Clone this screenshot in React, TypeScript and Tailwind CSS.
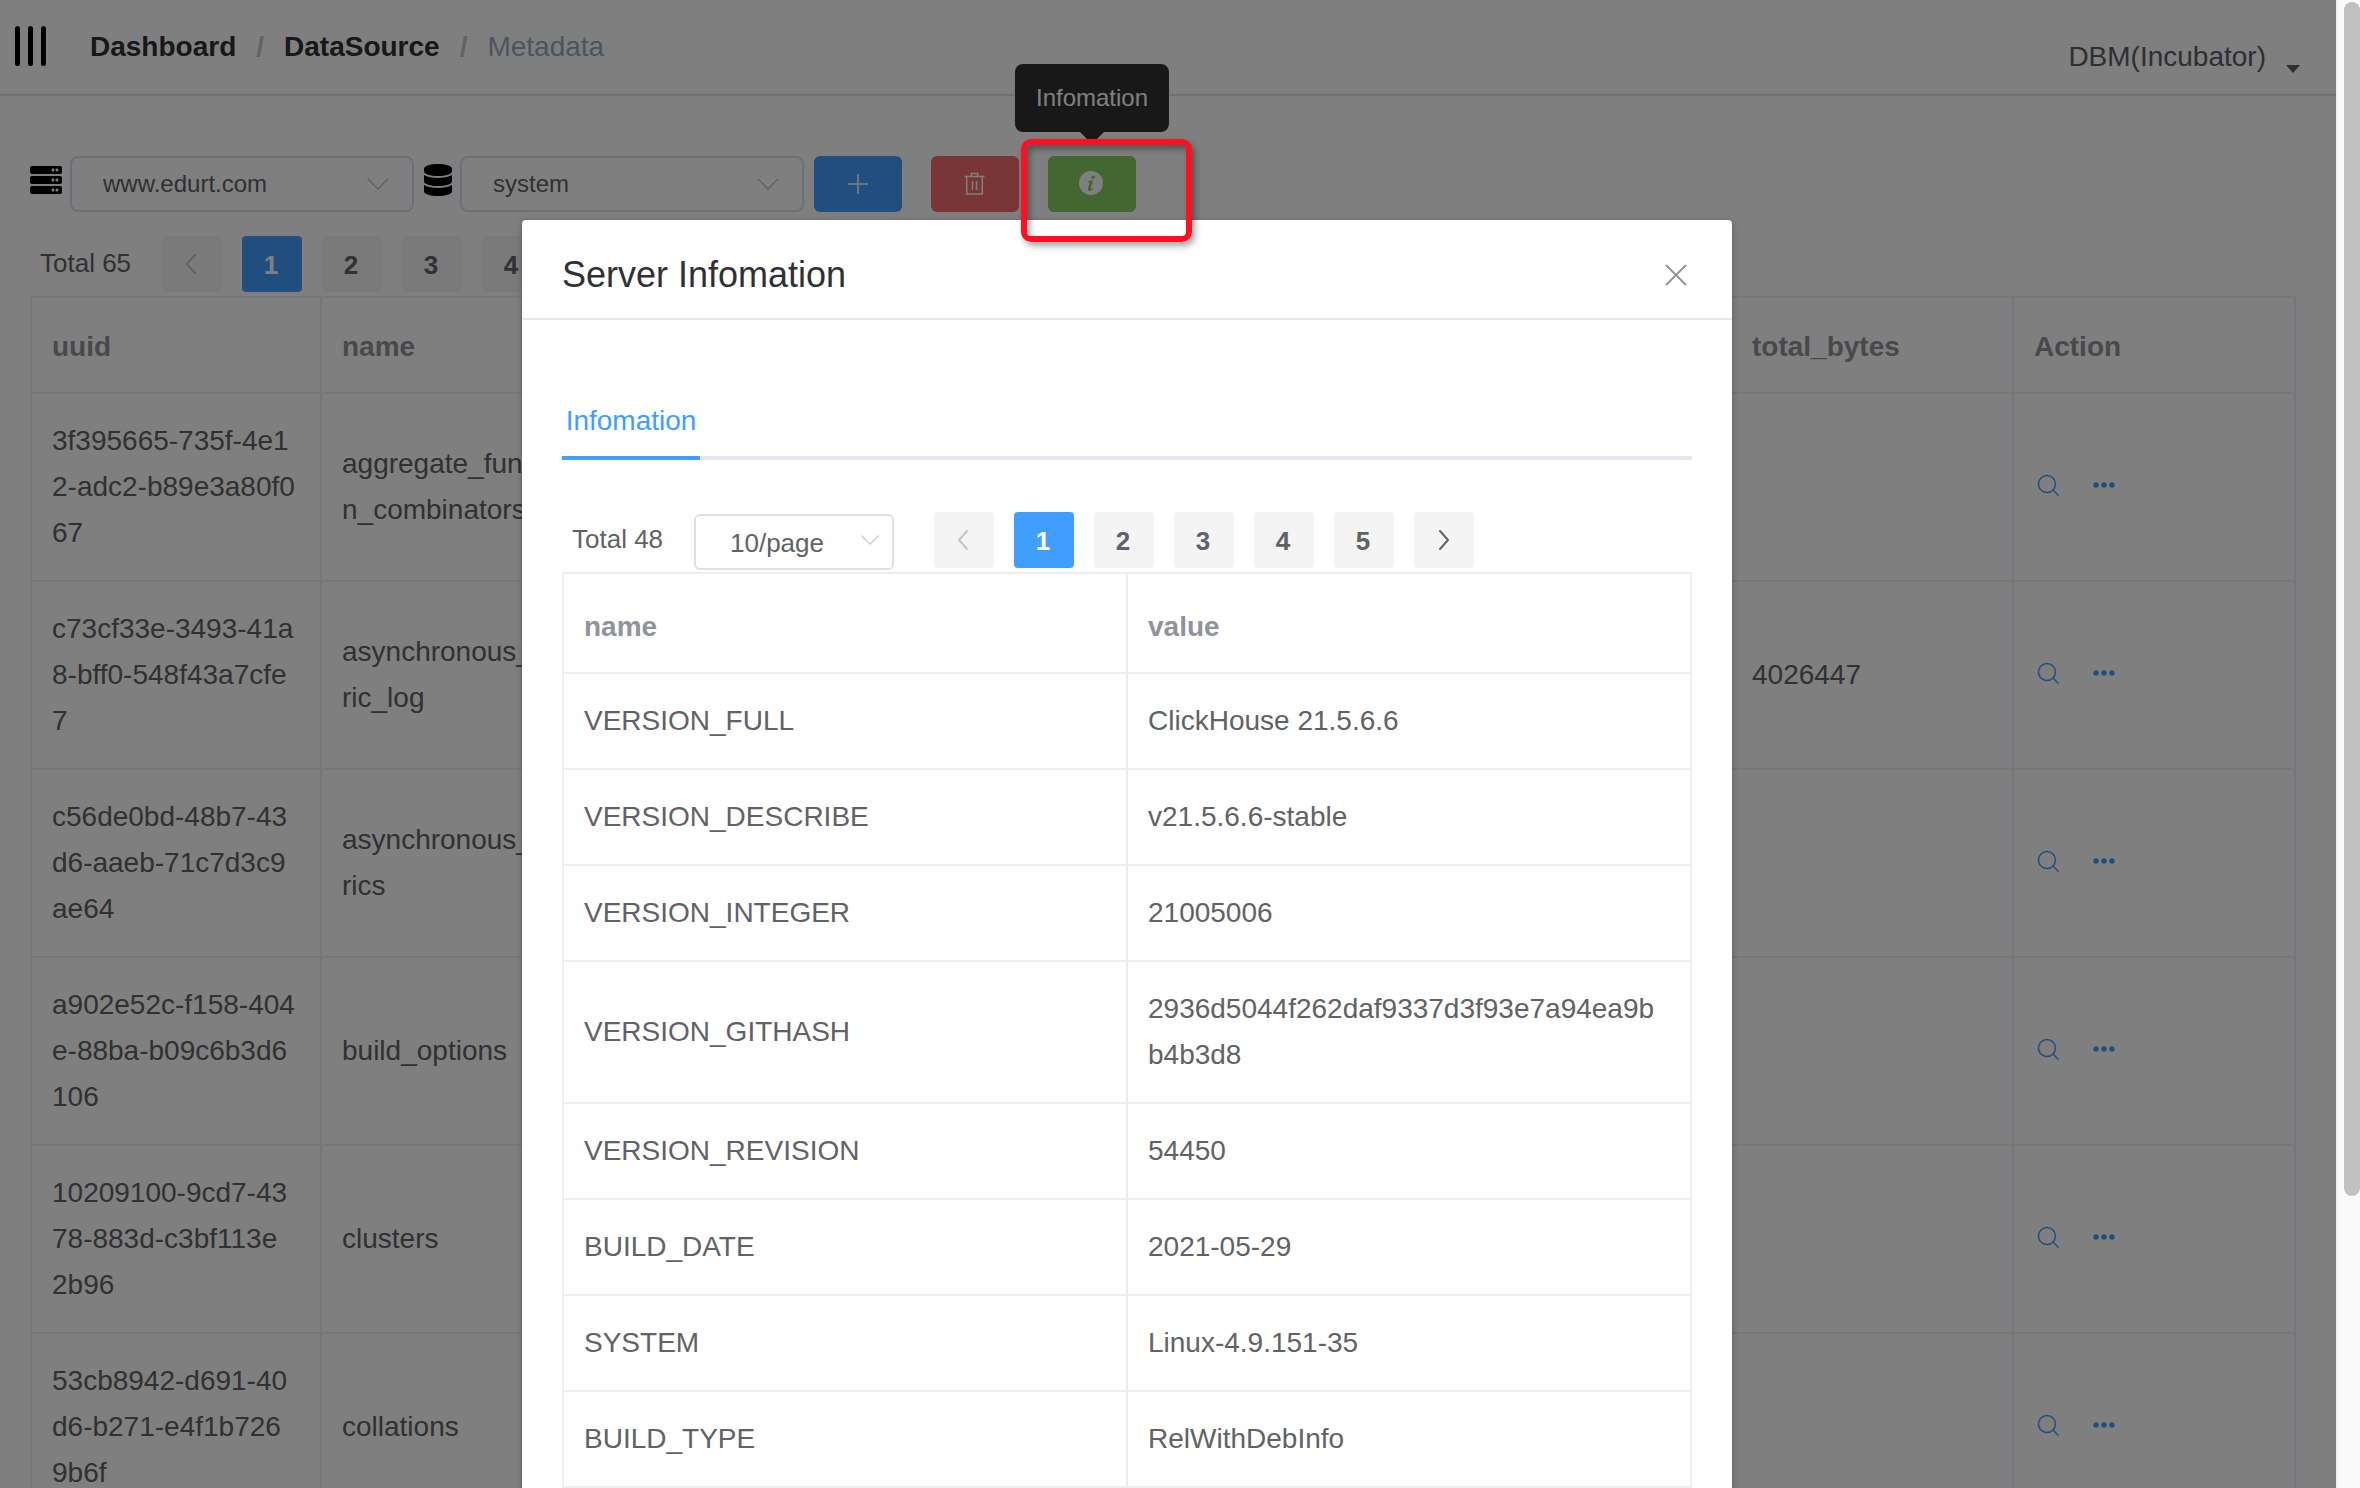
import React from "react";
import { FaDatabase, FaServer } from "react-icons/fa";

interface MetadataRow {
  uuid: string;
  name: string;
  totalBytes?: string;
}

interface ServerInfo {
  name: string;
  value: string;
}

const metadataRows: MetadataRow[] = [
  {
    uuid: "3f395665-735f-4e1\n2-adc2-b89e3a80f0\n67",
    name: "aggregate_functio\nn_combinators",
  },
  {
    uuid: "c73cf33e-3493-41a\n8-bff0-548f43a7cfe\n7",
    name: "asynchronous_met\nric_log",
    totalBytes: "4026447",
  },
  {
    uuid: "c56de0bd-48b7-43\nd6-aaeb-71c7d3c9\nae64",
    name: "asynchronous_met\nrics",
  },
  {
    uuid: "a902e52c-f158-404\ne-88ba-b09c6b3d6\n106",
    name: "build_options",
  },
  {
    uuid: "10209100-9cd7-43\n78-883d-c3bf113e\n2b96",
    name: "clusters",
  },
  {
    uuid: "53cb8942-d691-40\nd6-b271-e4f1b726\n9b6f",
    name: "collations",
  },
];

const serverInfo: ServerInfo[] = [
  { name: "VERSION_FULL", value: "ClickHouse 21.5.6.6" },
  { name: "VERSION_DESCRIBE", value: "v21.5.6.6-stable" },
  { name: "VERSION_INTEGER", value: "21005006" },
  {
    name: "VERSION_GITHASH",
    value: "2936d5044f262daf9337d3f93e7a94ea9b\nb4b3d8",
  },
  { name: "VERSION_REVISION", value: "54450" },
  { name: "BUILD_DATE", value: "2021-05-29" },
  { name: "SYSTEM", value: "Linux-4.9.151-35" },
  { name: "BUILD_TYPE", value: "RelWithDebInfo" },
];

// the columns between name and total_bytes
const emptyColumns = [0, 1, 2, 3];

const Chevron: React.FC<{ d: string; className: string; width?: number }> = ({
  d,
  className,
  width = 2,
}) => (
  <svg
    viewBox="0 0 24 24"
    className={className}
    fill="none"
    stroke="currentColor"
    strokeWidth={width}
    strokeLinecap="round"
    strokeLinejoin="round"
    aria-hidden="true"
  >
    <path d={d} />
  </svg>
);

const DOWN = "M2 7 12 17 22 7";
const LEFT = "M15 3 7 12 15 21";
const RIGHT = "M8 3 16 12 8 21";

const PlusIcon = () => (
  <svg viewBox="0 0 24 24" className="size-6" fill="none" stroke="currentColor" strokeWidth="1.6">
    <path d="M12 2v20M2 12h20" />
  </svg>
);

const TrashIcon = () => (
  <svg viewBox="0 0 24 24" className="size-6" fill="none" stroke="currentColor" strokeWidth="1.5">
    <path d="M1.500 4.500h20M3.700 4.500v17.500h15.600v-17.500M8.300 4.500V1.500h6.400v3M9.500 9v9M13.500 9v9" />
  </svg>
);

const InfoIcon = () => (
  <svg viewBox="0 0 24 24" className="size-6">
    <circle cx="12" cy="12" r="12" fill="currentColor" />
    <circle cx="14.200" cy="6.300" r="1.800" fill="#85ce61" />
    <path
      d="M9 10.200c1.700-.1 3.400-.5 5-1.100l-2.300 8.200c-.1.600 0 .9.300.9.500 0 1.100-.700 1.800-1.700l.600.400c-1.200 2-2.400 3-3.900 3-1.300 0-1.900-.9-1.500-2.300l1.500-5.400c.2-.8-.2-1.200-1.600-1.300z"
      fill="#85ce61"
    />
  </svg>
);

const SearchIcon = () => (
  <svg viewBox="0 0 28 28" className="size-7" fill="none" stroke="currentColor" strokeWidth="1.5">
    <circle cx="13" cy="11" r="8.500" />
    <path d="m18.500 16.500 6 6" />
  </svg>
);

const MoreIcon = () => (
  <svg viewBox="0 0 28 28" className="size-7" fill="currentColor">
    <circle cx="6" cy="12" r="2.700" />
    <circle cx="14" cy="12" r="2.700" />
    <circle cx="22" cy="12" r="2.700" />
  </svg>
);

const Select: React.FC<{ label: string; value: string }> = ({ label, value }) => (
  <div className="relative">
    <select
      aria-label={label}
      defaultValue={value}
      className="block h-14 w-[344px] appearance-none rounded-lg border-2 border-[#dcdfe6] bg-white pl-[31px] text-2xl text-[#606266]"
    >
      <option>{value}</option>
    </select>
    <Chevron
      d={DOWN}
      width={1.5}
      className="pointer-events-none absolute top-4 right-6 size-6 text-[#c0c4cc]"
    />
  </div>
);

const pageButton = "flex h-14 w-15 items-center justify-center rounded";

const Pager: React.FC<{ pages: number }> = ({ pages }) => (
  <nav className="flex gap-5 text-[26px] font-bold text-[#606266]">
    <button
      aria-label="Previous page"
      disabled
      className={`${pageButton} bg-[#f4f4f5] text-[#c0c4cc]`}
    >
      <Chevron d={LEFT} className="size-6" />
    </button>
    {Array.from({ length: pages }, (_, i) => (
      <button
        key={i}
        className={`${pageButton} pt-0.5 pr-0.5 ${
          i === 0 ? "bg-[#409eff] text-white" : "bg-[#f4f4f5]"
        }`}
      >
        {i + 1}
      </button>
    ))}
    <button aria-label="Next page" className={`${pageButton} bg-[#f4f4f5]`}>
      <Chevron d={RIGHT} className="size-6" />
    </button>
  </nav>
);

const Header = () => (
  <header className="flex h-24 justify-between border-b-2 border-[#e0e0e0] pr-9 pl-[15px]">
    <div className="flex items-center gap-11">
      <button aria-label="Toggle sidebar" className="flex gap-2 pb-0.5">
        <span className="h-10 w-[5px] rounded-full bg-black" />
        <span className="h-10 w-[5px] rounded-full bg-black" />
        <span className="h-10 w-[5px] rounded-full bg-black" />
      </button>
      <nav className="flex gap-5 text-[28px] leading-8">
        <a href="#dashboard" className="font-bold text-[#303133]">
          Dashboard
        </a>
        <span className="font-bold text-[#c0c4cc]">/</span>
        <a href="#datasource" className="font-bold text-[#303133]">
          DataSource
        </a>
        <span className="font-bold text-[#c0c4cc]">/</span>
        <span className="text-[#97a8be]">Metadata</span>
      </nav>
    </div>
    <button className="flex items-center gap-5 pt-5 text-[28px] text-[#5a5e66]">
      DBM(Incubator)
      <svg viewBox="0 0 14 8" className="mt-6 h-2 w-3.5" fill="currentColor">
        <path d="M0 0h14L7 8z" />
      </svg>
    </button>
  </header>
);

const Toolbar = () => (
  <div className="flex items-center gap-2.5">
    <div className="flex items-center gap-2">
      <FaServer className="mb-2 size-8 text-black" />
      <Select label="Server" value="www.edurt.com" />
    </div>
    <div className="flex items-center gap-2">
      <FaDatabase className="mb-2 h-8 w-7 text-black" />
      <Select label="Database" value="system" />
    </div>
    <div className="flex gap-[29px] text-white">
      <button
        aria-label="Add"
        className="flex h-14 w-22 items-center justify-center rounded-md bg-[#409eff]"
      >
        <PlusIcon />
      </button>
      <button
        aria-label="Delete"
        className="flex h-14 w-22 items-center justify-center rounded-md bg-[#f56c6c]"
      >
        <TrashIcon />
      </button>
      <div className="relative">
        <button
          aria-label="Server information"
          className="flex h-14 w-22 items-center justify-center rounded-md bg-[#85ce61] pr-0.5 pb-0.5"
        >
          <InfoIcon />
        </button>
        <div
          role="tooltip"
          className="absolute bottom-20 left-1/2 -translate-x-1/2 rounded-lg bg-[#303133] px-[21px] py-5 text-2xl leading-7"
        >
          Infomation
          <svg
            viewBox="0 0 24 12"
            className="absolute top-full left-1/2 h-3 w-6 -translate-x-1/2"
            fill="#303133"
          >
            <path d="M0 0h24L12 12z" />
          </svg>
        </div>
      </div>
    </div>
  </div>
);

const MetadataTable = () => {
  const border = "border-r-2 border-b-2 border-[#ebeef5] px-5";
  const head = `${border} pt-[26px] pb-[22px]`;
  const cell = `${border} py-6`;

  return (
    <table className="w-full table-fixed border-separate border-spacing-0 border-t-2 border-l-2 border-[#ebeef5] text-left text-[28px] leading-[46px] text-[#606266]">
      <thead className="text-[#909399]">
        <tr>
          <th className={`${head} w-[290px]`}>uuid</th>
          <th className={head}>name</th>
          {emptyColumns.map((column) => (
            <th key={column} className={head} />
          ))}
          <th className={head}>total_bytes</th>
          <th className={head}>Action</th>
        </tr>
      </thead>
      <tbody>
        {metadataRows.map((row) => (
          <tr key={row.uuid}>
            <td className={`${cell} whitespace-pre`}>{row.uuid}</td>
            <td className={`${cell} whitespace-pre`}>{row.name}</td>
            {emptyColumns.map((column) => (
              <td key={column} className={cell} />
            ))}
            <td className={cell}>{row.totalBytes}</td>
            <td className={cell}>
              <div className="flex gap-7 text-[#409eff]">
                <button aria-label="Preview">
                  <SearchIcon />
                </button>
                <button aria-label="More">
                  <MoreIcon />
                </button>
              </div>
            </td>
          </tr>
        ))}
      </tbody>
    </table>
  );
};

const ServerDialog = () => {
  const border = "border-r-2 border-b-2 border-[#ebeef5] px-5";
  const head = `${border} pt-[30px] pb-[22px]`;
  const cell = `${border} py-6`;

  return (
    <section
      role="dialog"
      aria-labelledby="dialog-title"
      className="w-[1210px] max-w-full rounded bg-white shadow-[0_2px_6px_rgba(0,0,0,0.3)]"
    >
      <div className="flex h-25 items-center justify-between border-b-2 border-[#e8e8e8] px-10 pt-3">
        <h2 id="dialog-title" className="text-4xl leading-10 text-[#303133]">
          Server Infomation
        </h2>
        <button aria-label="Close" className="text-[#909399]">
          <svg
            viewBox="0 0 32 32"
            className="size-8"
            fill="none"
            stroke="currentColor"
            strokeWidth="1.8"
          >
            <path d="m6 6 20 20M26 6 6 26" />
          </svg>
        </button>
      </div>

      <div className="px-10 pt-15 pb-10">
        <div role="tablist" className="flex border-b-4 border-[#e4e7ed]">
          <button
            role="tab"
            aria-selected="true"
            className="-mb-1 h-20 min-w-[138px] border-b-4 border-[#409eff] pt-1.5 text-[28px] text-[#409eff]"
          >
            Infomation
          </button>
        </div>

        <div className="mt-13 flex pb-1 pl-2.5 text-[26px] text-[#606266]">
          <span className="mr-5 w-[102px] leading-[54px]">Total 48</span>
          <div className="relative mt-0.5 mr-10 -mb-0.5">
            <select
              aria-label="Page size"
              defaultValue="10/page"
              className="block h-14 w-50 appearance-none rounded-md border-2 border-[#dcdfe6] bg-white pt-0.5 pl-[34px]"
            >
              <option>10/page</option>
            </select>
            <Chevron
              d={DOWN}
              className="pointer-events-none absolute top-4 right-3.5 size-5 text-[#c0c4cc]"
              width={1.5}
            />
          </div>
          <Pager pages={5} />
        </div>

        <table className="w-full table-fixed border-separate border-spacing-0 border-t-2 border-l-2 border-[#ebeef5] text-left text-[28px] leading-[46px] text-[#606266]">
          <thead className="text-[#909399]">
            <tr>
              <th className={head}>name</th>
              <th className={head}>value</th>
            </tr>
          </thead>
          <tbody>
            {serverInfo.map((info) => (
              <tr key={info.name}>
                <td className={cell}>{info.name}</td>
                <td className={`${cell} whitespace-pre`}>{info.value}</td>
              </tr>
            ))}
          </tbody>
        </table>
      </div>
    </section>
  );
};

export default function App() {
  return (
    <div className="flex h-screen overflow-hidden bg-white font-['Liberation_Sans',Arial,sans-serif]">
      <div className="relative h-full min-w-0 flex-1 overflow-hidden">
        <Header />
        <main className="pt-15 pr-10 pl-[30px]">
          <Toolbar />
          <div className="mt-6 flex pb-1 pl-2.5 text-[26px] text-[#606266]">
            <span className="mr-5 w-[102px] leading-[54px]">Total 65</span>
            <Pager pages={4} />
          </div>
          <MetadataTable />
        </main>

        <div className="absolute inset-0 flex items-start justify-center bg-black/50 pt-55 pr-[82px]">
          <ServerDialog />
        </div>

        {/* marker around the information button */}
        <div className="absolute top-[139px] left-[1021px] h-[103px] w-[171px] rounded-[10px] border-6 border-[#ff1020] shadow-[3px_4px_6px_rgba(0,0,0,0.35),inset_3px_4px_6px_rgba(0,0,0,0.35)]" />
      </div>

      <div className="flex w-6 justify-end border-l-2 border-[#f0f0f0] bg-[#fafafa] pt-0.5">
        <div className="h-[1194px] w-4 rounded-full bg-[#c1c1c1]" />
      </div>
    </div>
  );
}
